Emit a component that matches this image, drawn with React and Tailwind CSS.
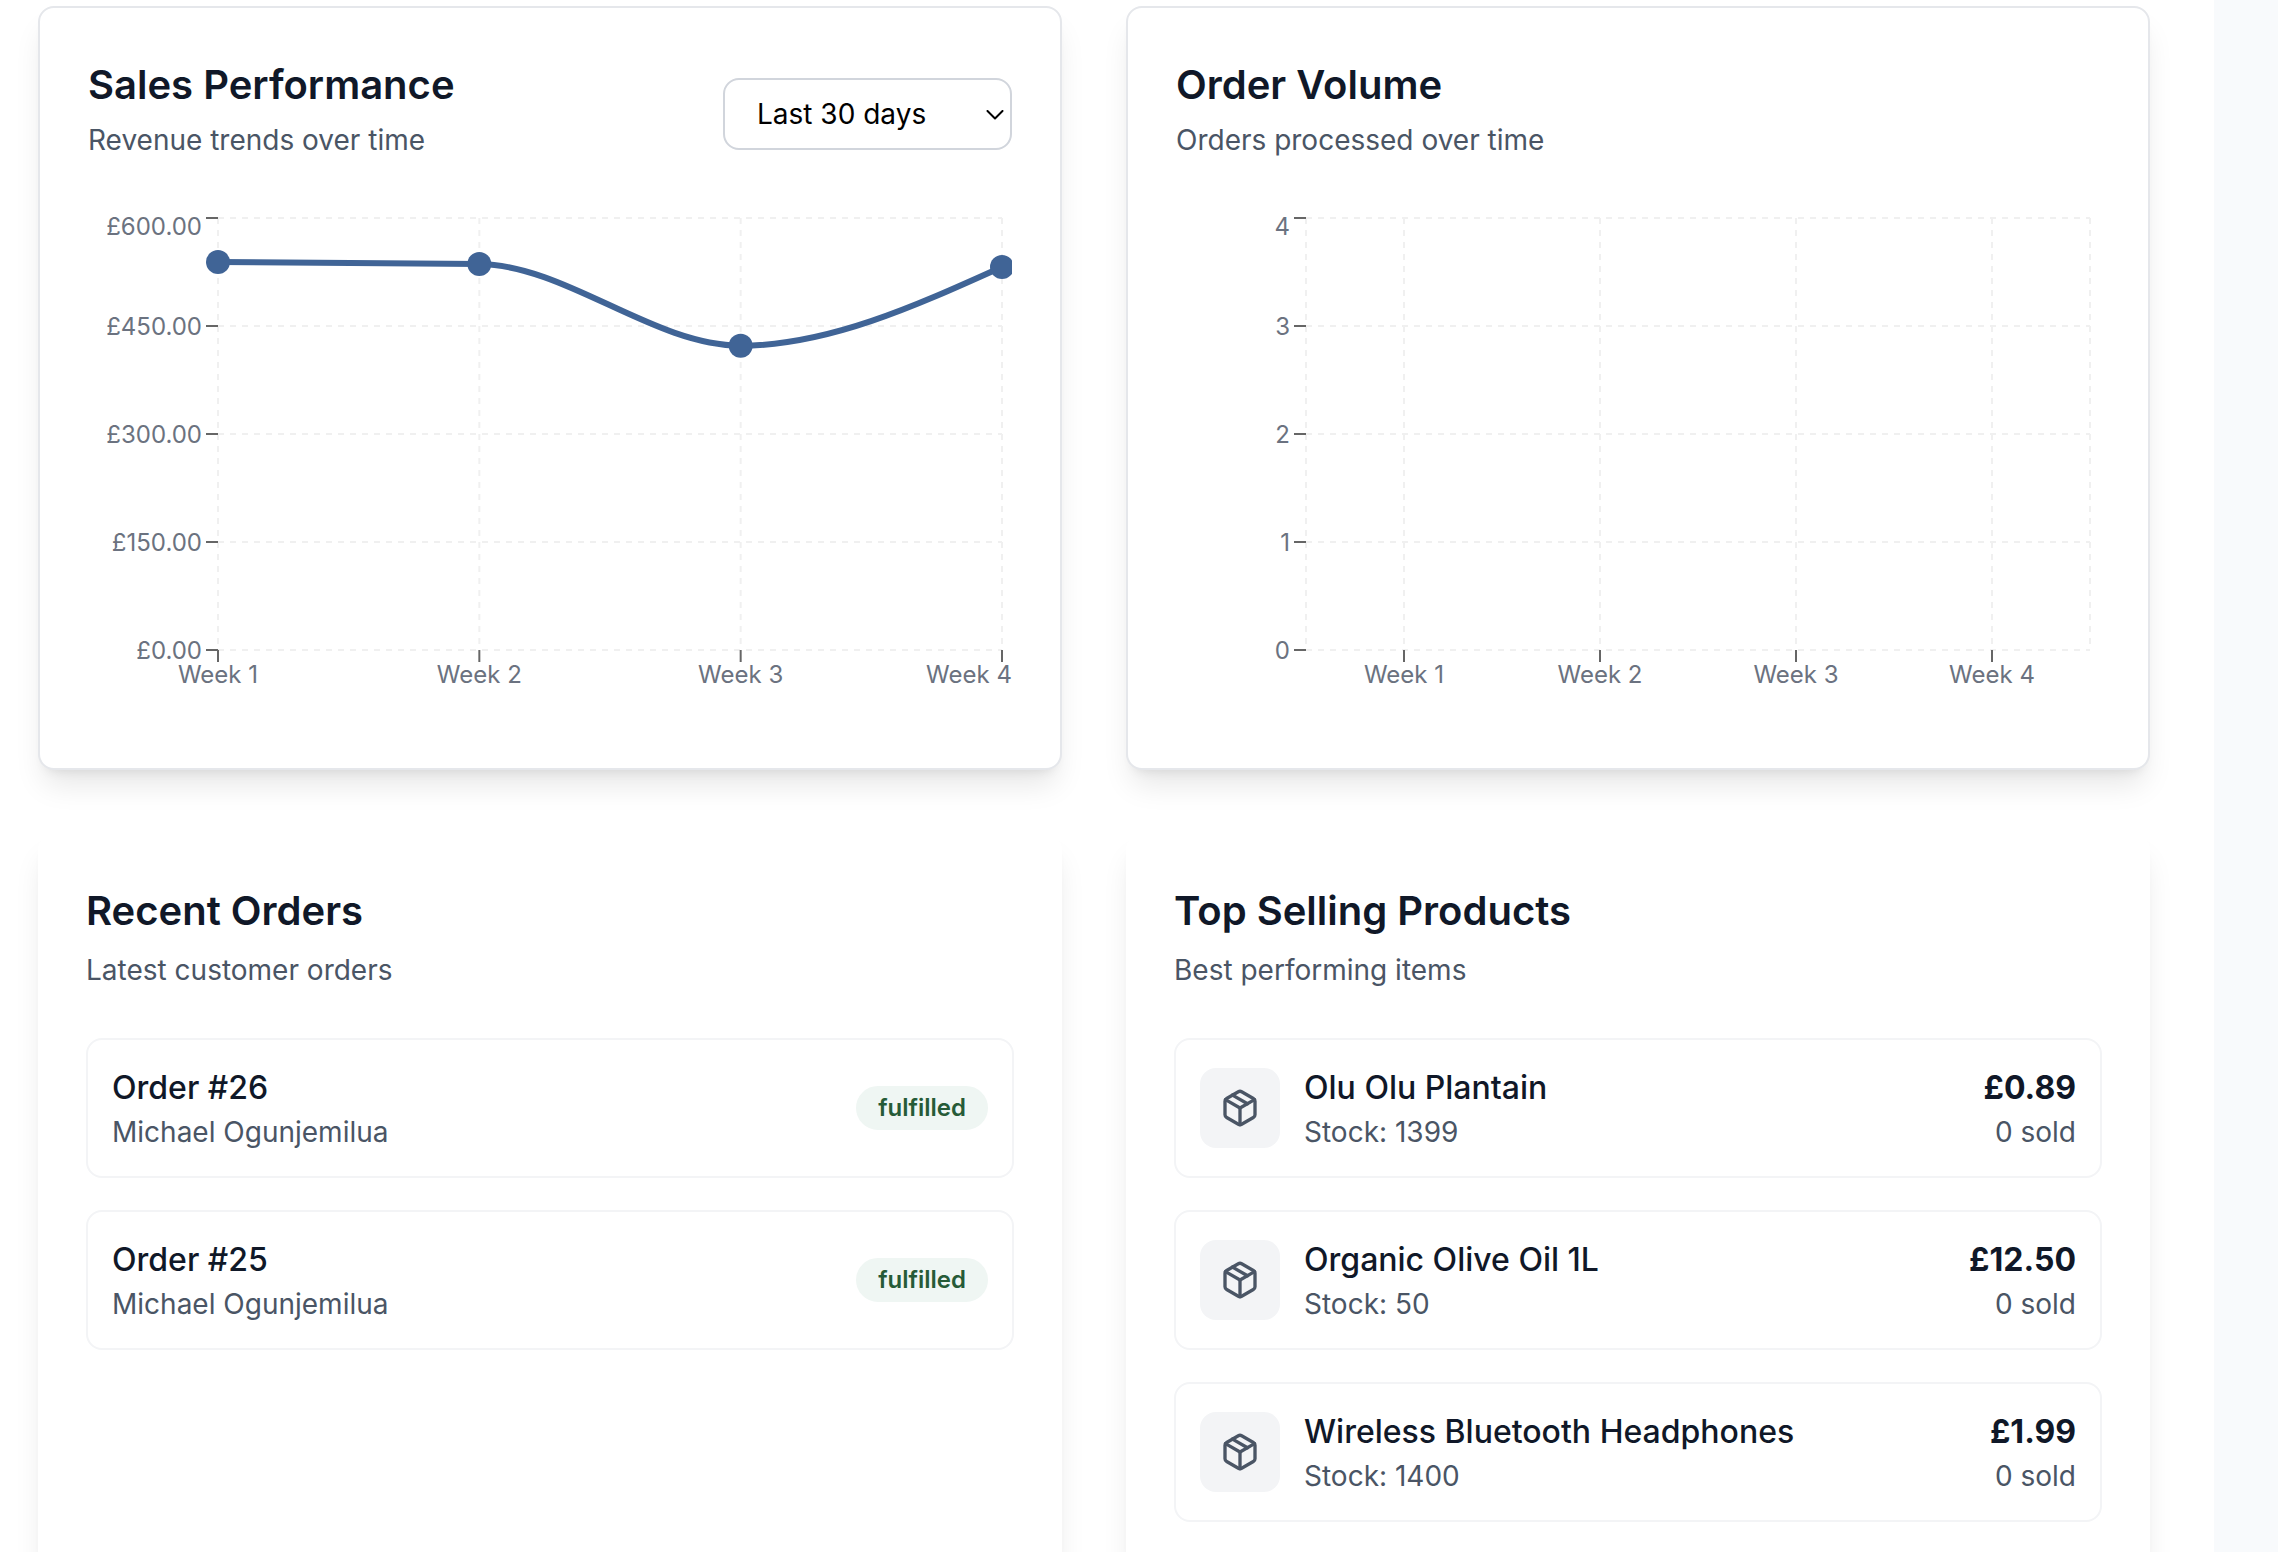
import { Package } from "lucide-react";

const weeks = ["Week 1", "Week 2", "Week 3", "Week 4"];

const orders = [
  { id: 26, customer: "Michael Ogunjemilua", status: "fulfilled" },
  { id: 25, customer: "Michael Ogunjemilua", status: "fulfilled" },
];

const products = [
  { name: "Olu Olu Plantain", stock: 1399, price: "£0.89", sold: 0 },
  { name: "Organic Olive Oil 1L", stock: 50, price: "£12.50", sold: 0 },
  { name: "Wireless Bluetooth Headphones", stock: 1400, price: "£1.99", sold: 0 },
];

const rowY = [10, 118, 226, 334, 442];

function ChartFrame({ label, columns, ticks, yLabels, lastLabelX, children }) {
  return (
    <svg viewBox="0 0 924 512" className="block w-full" role="img" aria-label={label}>
      <g stroke="#f0f0f0" strokeWidth="2" strokeDasharray="6 6">
        {rowY.map((y) => (
          <line key={y} x1="130" x2="914" y1={y} y2={y} />
        ))}
        {columns.map((x) => (
          <line key={x} x1={x} x2={x} y1="10" y2="442" />
        ))}
      </g>
      <g stroke="#666666" strokeWidth="2">
        {rowY.map((y) => (
          <line key={y} x1="118" x2="130" y1={y} y2={y} />
        ))}
        {ticks.map((x) => (
          <line key={x} x1={x} x2={x} y1="442" y2="454" />
        ))}
      </g>
      <g fill="#6b7280" className="text-2xl">
        {yLabels.map((text, i) => (
          <text key={text} x="114" y={i === 0 ? 27 : rowY[i] + 9} textAnchor="end">
            {text}
          </text>
        ))}
        {weeks.map((week, i) => (
          <text key={week} x={i === 3 ? lastLabelX : ticks[i]} y="475" textAnchor="middle">
            {week}
          </text>
        ))}
      </g>
      {children}
    </svg>
  );
}

function ChartCard({ title, subtitle, action, children }) {
  return (
    <section className="rounded-2xl border-2 border-gray-200 bg-white p-12 shadow-[0_20px_30px_-6px_rgb(0_0_0/0.1),0_8px_12px_-8px_rgb(0_0_0/0.1)]">
      <div className="mb-12 flex items-center justify-between">
        <div>
          <h2 className="text-[40px] leading-[58px] font-semibold text-gray-900">{title}</h2>
          <p className="mt-1.5 text-[28px] leading-10 text-gray-600">{subtitle}</p>
        </div>
        {action}
      </div>
      {children}
    </section>
  );
}

function ListCard({ title, subtitle, children }) {
  return (
    <section className="rounded-2xl bg-white p-12 shadow-[0_20px_30px_-6px_rgb(0_0_0/0.1),0_8px_12px_-8px_rgb(0_0_0/0.1)]">
      <h2 className="text-[40px] leading-[58px] font-semibold text-gray-900">{title}</h2>
      <p className="mt-2.5 text-[28px] leading-10 text-gray-600">{subtitle}</p>
      <ul className="mt-12 flex flex-col gap-8">{children}</ul>
    </section>
  );
}

function PeriodSelect() {
  return (
    <div className="relative mt-3">
      <select
        aria-label="Period"
        defaultValue="30"
        className="h-18 w-[289px] appearance-none rounded-2xl border-2 border-gray-300 bg-white pl-8 text-[28px] leading-10 text-black"
      >
        <option value="7">Last 7 days</option>
        <option value="30">Last 30 days</option>
        <option value="90">Last 90 days</option>
      </select>
      <svg
        viewBox="0 0 18 10"
        className="pointer-events-none absolute top-8 right-2 w-[18px]"
        fill="none"
        stroke="black"
        strokeWidth="2"
        strokeLinecap="round"
        strokeLinejoin="round"
        aria-hidden="true"
      >
        <path d="M1.500 1 9 8.500 16.500 1" />
      </svg>
    </div>
  );
}

const lineTicks = [130, 391.33, 652.67, 914];
const barTicks = [228, 424, 620, 816];

export default function App() {
  return (
    <div className="min-h-screen bg-slate-50 pr-16 font-['Inter',sans-serif]">
      <main className="h-screen overflow-hidden bg-white pt-1.5 pr-16 pl-[38px]">
        <div className="grid grid-cols-2 gap-16">
          <ChartCard
            title="Sales Performance"
            subtitle="Revenue trends over time"
            action={<PeriodSelect />}
          >
            <ChartFrame
              label="Sales Performance"
              columns={lineTicks}
              ticks={lineTicks}
              yLabels={["£600.00", "£450.00", "£300.00", "£150.00", "£0.00"]}
              lastLabelX={881}
            >
              <path
                d="M130 54C217.110 54.330 304.220 54.670 391.330 56C478.440 57.330 565.560 137.700 652.670 137.700C739.780 137.700 826.890 98.300 914 59"
                fill="none"
                stroke="#406496"
                strokeWidth="6"
              />
              <g fill="#406496">
                <circle cx="130" cy="54" r="12" />
                <circle cx="391.33" cy="56" r="12" />
                <circle cx="652.67" cy="137.7" r="12" />
                <circle cx="914" cy="59" r="12" />
              </g>
            </ChartFrame>
          </ChartCard>

          <ChartCard title="Order Volume" subtitle="Orders processed over time">
            <ChartFrame
              label="Order Volume"
              columns={[130, ...barTicks, 914]}
              ticks={barTicks}
              yLabels={["4", "3", "2", "1", "0"]}
              lastLabelX={816}
            />
          </ChartCard>

          <ListCard title="Recent Orders" subtitle="Latest customer orders">
            {orders.map((order) => (
              <li
                key={order.id}
                className="flex items-center justify-between rounded-2xl border-2 border-gray-100 p-6"
              >
                <div>
                  <p className="text-[32px] leading-12 font-medium text-gray-900">Order #{order.id}</p>
                  <p className="text-[28px] leading-10 text-gray-600">{order.customer}</p>
                </div>
                <span className="rounded-full border-2 border-[#eff6f3] bg-[#eff6f3] px-5 py-1 text-2xl leading-8 font-semibold text-[#265b37]">
                  {order.status}
                </span>
              </li>
            ))}
          </ListCard>

          <ListCard title="Top Selling Products" subtitle="Best performing items">
            {products.map((product) => (
              <li
                key={product.name}
                className="flex items-center gap-6 rounded-2xl border-2 border-gray-100 p-6"
              >
                <div className="flex size-20 items-center justify-center rounded-2xl bg-gray-100">
                  <Package className="size-10 text-gray-600" aria-hidden="true" />
                </div>
                <div className="flex-1">
                  <p className="text-[32px] leading-12 font-medium text-gray-900">{product.name}</p>
                  <p className="text-[28px] leading-10 text-gray-600">Stock: {product.stock}</p>
                </div>
                <div className="text-right">
                  <p className="text-[32px] leading-12 font-bold text-gray-900">{product.price}</p>
                  <p className="text-[28px] leading-10 text-gray-600">{product.sold} sold</p>
                </div>
              </li>
            ))}
          </ListCard>
        </div>
      </main>
    </div>
  );
}
